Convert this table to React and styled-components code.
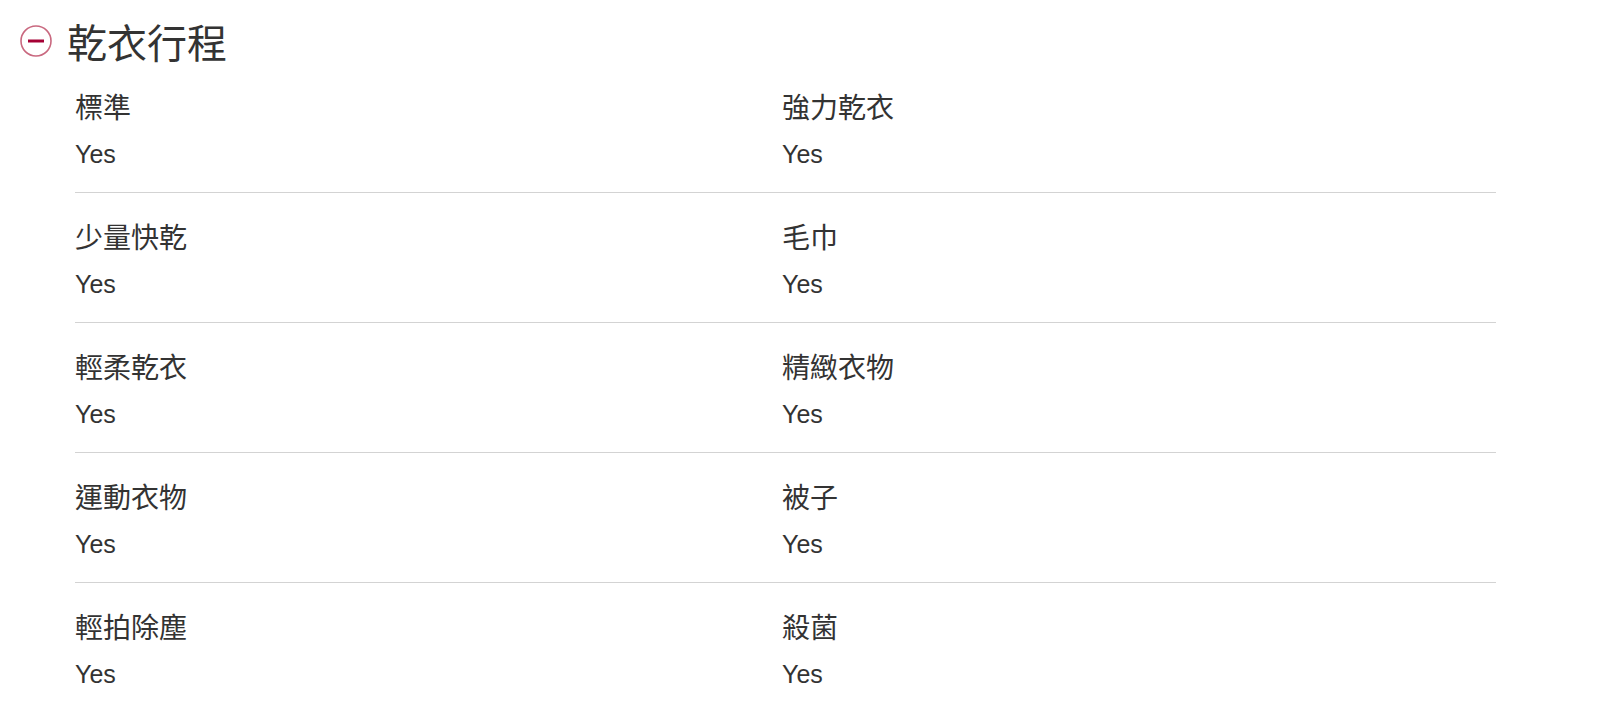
import React from 'react'
import styled, { createGlobalStyle } from 'styled-components'

const GlobalStyle = createGlobalStyle`
    body {
        margin: 0;
        background: #ffffff;
        font-family: "Liberation Sans", "Noto Sans CJK TC", sans-serif;
        color: #333333;
    }
`

const programs = [
    ['標準', '強力乾衣'],
    ['少量快乾', '毛巾'],
    ['輕柔乾衣', '精緻衣物'],
    ['運動衣物', '被子'],
    ['輕拍除塵', '殺菌'],
]

function App() {
    return (
        <Wrap>
            <GlobalStyle />
            <Header>
                <CollapseIcon viewBox='0 0 32 32' aria-hidden='true'>
                    <circle cx='16' cy='16' r='15' fill='none' stroke='#c9687f' strokeWidth='1.6' />
                    <line x1='8' y1='16' x2='24' y2='16' stroke='#a50034' strokeWidth='3' />
                </CollapseIcon>
                <Title>乾衣行程</Title>
            </Header>
            <List>
                {programs.map((pair) => (
                    <Row key={pair[0]}>
                        {pair.map((name) => (
                            <Cell key={name}>
                                <Label>{name}</Label>
                                <Value>Yes</Value>
                            </Cell>
                        ))}
                    </Row>
                ))}
            </List>
        </Wrap>
    )
}

export default App

const Wrap = styled.div`
    width: 1600px;
    height: 710px;
    overflow: hidden;
`

const Header = styled.div`
    display: flex;
    align-items: center;
    gap: 15px;
    height: 36px;
    padding: 26px 0 1px 20px;
`

const CollapseIcon = styled.svg`
    width: 32px;
    height: 32px;
    flex-shrink: 0;
    margin-bottom: 6px;
`

const Title = styled.h2`
    margin: 0;
    font-size: 40px;
    font-weight: 400;
    line-height: 36px;
    color: #333333;
    font-family: "Liberation Sans", "Noto Sans CJK TC", sans-serif;
`

const List = styled.div`
    margin-left: 75px;
    width: 1421px;
`

const Row = styled.div`
    display: grid;
    grid-template-columns: 707px 1fr;
    padding: 28px 0 20px;
    border-bottom: 1px solid #d3d3d3;
`

const Cell = styled.div`
    display: flex;
    flex-direction: column;
    gap: 9px;
`

const Label = styled.div`
    font-size: 28px;
    line-height: 36px;
    color: #333333;
`

const Value = styled.div`
    font-size: 25px;
    line-height: 36px;
    color: #333333;
`
